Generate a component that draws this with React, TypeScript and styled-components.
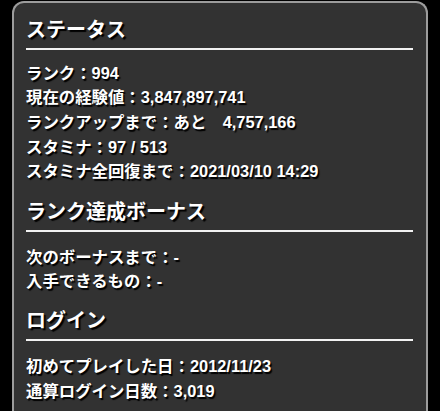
import React from 'react'
import styled, { createGlobalStyle } from 'styled-components'

const GlobalStyle = createGlobalStyle`
  html, body {
    margin: 0;
    padding: 0;
    background: #000;
  }
  body {
    font-family: "Liberation Sans", "Noto Sans CJK JP", sans-serif;
  }
`

interface Section {
  title: string
  rows: { label: string; value: string }[]
}

const sections: Section[] = [
  {
    title: 'ステータス',
    rows: [
      { label: 'ランク', value: '994' },
      { label: '現在の経験値', value: '3,847,897,741' },
      { label: 'ランクアップまで', value: 'あと\u30004,757,166' },
      { label: 'スタミナ', value: '97 / 513' },
      { label: 'スタミナ全回復まで', value: '2021/03/10 14:29' },
    ],
  },
  {
    title: 'ランク達成ボーナス',
    rows: [
      { label: '次のボーナスまで', value: '-' },
      { label: '入手できるもの', value: '-' },
    ],
  },
  {
    title: 'ログイン',
    rows: [
      { label: '初めてプレイした日', value: '2012/11/23' },
      { label: '通算ログイン日数', value: '3,019' },
    ],
  },
]

export default function App() {
  return (
    <>
      <GlobalStyle />
      <Page>
        <Panel>
          {sections.map((s, i) => (
            <Block key={s.title}>
              <Heading>{s.title}</Heading>
              <List $gap={i === 0 ? 10.5 : 13}>
                {s.rows.map(r => (
                  <Row key={r.label}>
                    {r.label}：{r.value}
                  </Row>
                ))}
              </List>
            </Block>
          ))}
        </Panel>
      </Page>
    </>
  )
}

const Page = styled.div`
  width: 440px;
  height: 411px;
  overflow: hidden;
  background: #000;
  padding-top: 1px;
  box-sizing: border-box;
`

const Panel = styled.div`
  margin-left: 12px;
  width: 416px;
  min-height: 430px;
  box-sizing: border-box;
  background: #323232;
  border: 2px solid #9c9c9c;
  border-bottom: none;
  border-radius: 12px 12px 0 0;
  padding: 15px 13px 0 12px;
`

const Block = styled.div`
  & + & {
    margin-top: 15.5px;
  }
`

const Heading = styled.div`
  font-size: 20px;
  line-height: 24px;
  font-weight: 700;
  color: #fff;
  text-shadow: 2px 2px 1px #000;
  padding-bottom: 6px;
  border-bottom: 2px solid #f2f2f2;
`

const List = styled.div<{ $gap: number }>`
  margin-top: ${p => p.$gap}px;
`

const Row = styled.div`
  font-size: 16.4px;
  line-height: 24.7px;
  font-weight: 700;
  color: #fff;
  text-shadow: 1.5px 1.5px 1px #000;
  white-space: pre;
`
